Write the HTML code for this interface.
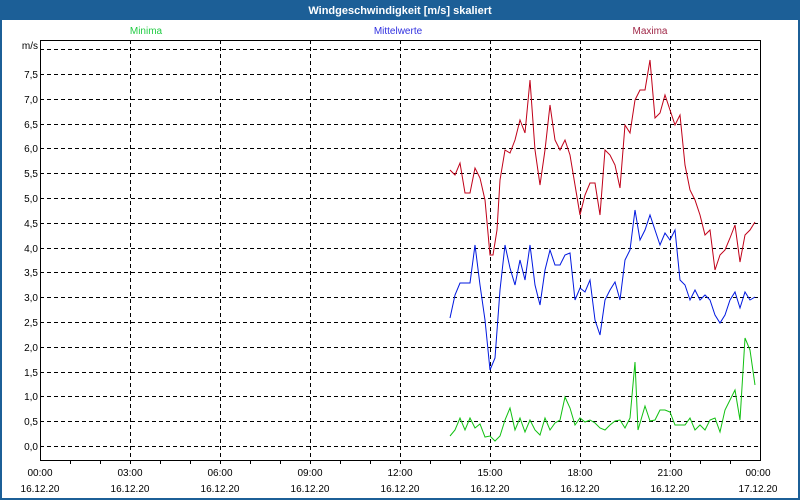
<!DOCTYPE html><html><head><style>body{margin:0;width:800px;height:500px;overflow:hidden;background:#fff;font-family:"Liberation Sans",sans-serif}</style></head><body>
<svg width="800" height="500" xmlns="http://www.w3.org/2000/svg" style="display:block">
<rect x="0" y="0" width="800" height="500" fill="#1c5f97"/>
<rect x="2" y="20" width="796" height="478" fill="#fff"/>
<text x="400" y="14" fill="#fff" font-size="11" font-weight="bold" text-anchor="middle">Windgeschwindigkeit [m/s] skaliert</text>
<g font-size="10" text-anchor="middle">
<text x="146" y="34" fill="#22cc44">Minima</text>
<text x="398" y="34" fill="#3030e0">Mittelwerte</text>
<text x="650" y="34" fill="#a02848">Maxima</text>
</g>
<g stroke="#000" stroke-width="1" stroke-dasharray="4,3" fill="none">
<path d="M40 49.5H760M40 74.5H760M40 99.5H760M40 124.5H760M40 148.5H760M40 173.5H760M40 198.5H760M40 223.5H760M40 248.5H760M40 272.5H760M40 297.5H760M40 322.5H760M40 347.5H760M40 372.5H760M40 396.5H760M40 421.5H760M40 446.5H760"/>
<path d="M130.5 40V460M220.5 40V460M310.5 40V460M400.5 40V460M490.5 40V460M580.5 40V460M670.5 40V460"/>
</g>
<g stroke="#000" fill="none">
<rect x="40.5" y="40.5" width="720" height="420"/>
<path d="M70.5 460V464M100.5 460V464M130.5 460V464M160.5 460V464M190.5 460V464M220.5 460V464M250.5 460V464M280.5 460V464M310.5 460V464M340.5 460V464M370.5 460V464M400.5 460V464M430.5 460V464M460.5 460V464M490.5 460V464M520.5 460V464M550.5 460V464M580.5 460V464M610.5 460V464M640.5 460V464M670.5 460V464M700.5 460V464M730.5 460V464"/>
<path d="M130.5 40V44M220.5 40V44M310.5 40V44M400.5 40V44M490.5 40V44M580.5 40V44M670.5 40V44"/>
</g>
<g font-size="10" fill="#000" text-anchor="end">
<text x="38" y="49">m/s</text>
<text x="38" y="78">7,5</text><text x="38" y="103">7,0</text><text x="38" y="128">6,5</text><text x="38" y="152">6,0</text><text x="38" y="177">5,5</text><text x="38" y="202">5,0</text><text x="38" y="227">4,5</text><text x="38" y="252">4,0</text><text x="38" y="276">3,5</text><text x="38" y="301">3,0</text><text x="38" y="326">2,5</text><text x="38" y="351">2,0</text><text x="38" y="376">1,5</text><text x="38" y="400">1,0</text><text x="38" y="425">0,5</text><text x="38" y="450">0,0</text>
</g>
<g font-size="10" fill="#000" text-anchor="middle">
<text x="40" y="476">00:00</text><text x="40" y="492">16.12.20</text>
<text x="130" y="476">03:00</text><text x="130" y="492">16.12.20</text>
<text x="220" y="476">06:00</text><text x="220" y="492">16.12.20</text>
<text x="310" y="476">09:00</text><text x="310" y="492">16.12.20</text>
<text x="400" y="476">12:00</text><text x="400" y="492">16.12.20</text>
<text x="490" y="476">15:00</text><text x="490" y="492">16.12.20</text>
<text x="580" y="476">18:00</text><text x="580" y="492">16.12.20</text>
<text x="670" y="476">21:00</text><text x="670" y="492">16.12.20</text>
<text x="758" y="476">00:00</text><text x="758" y="492">17.12.20</text>
</g>
<polyline fill="none" stroke="#c00018" stroke-width="1" points="450,170 455,175 460,163 465,193 470,193 475,168 480,178 485,200 490,255 493,255 497,230 500,180 505,150 510,153 515,140 520,120 525,133 530,80 535,150 540,185 545,150 550,105 555,140 560,150 565,140 570,155 575,185 580,215 585,195 590,183 595,183 600,215 605,150 610,155 615,165 620,188 625,125 630,133 635,100 640,90 645,90 650,60 655,118 660,113 665,95 670,110 675,125 680,115 685,165 690,190 695,200 700,215 705,235 710,230 715,270 720,255 725,250 730,238 735,225 740,262 745,235 750,230 755,222"/>
<polyline fill="none" stroke="#0018e0" stroke-width="1" points="450,318 455,295 460,283 465,283 470,283 475,245 480,285 485,320 490,370 495,358 500,290 505,245 510,268 515,285 520,260 525,280 530,245 535,285 540,305 545,270 550,250 555,265 560,265 565,255 570,253 575,300 580,288 585,292 590,280 595,320 600,335 605,300 610,290 615,282 620,300 625,260 630,250 635,210 640,240 645,230 650,215 655,230 660,245 665,233 670,240 675,230 680,280 685,285 690,300 695,290 700,300 705,295 710,300 715,315 720,323 725,315 730,300 735,292 740,308 745,292 750,300 755,297"/>
<polyline fill="none" stroke="#10c010" stroke-width="1" points="450,436 455,430 460,418 465,430 470,418 475,428 480,424 485,437 490,436 495,441 500,436 505,420 510,408 515,430 520,418 525,432 530,420 535,430 540,435 545,418 550,430 555,423 560,420 565,397 570,408 575,425 580,418 585,422 590,420 595,423 600,428 605,430 610,425 615,421 620,420 625,428 630,418 635,362 638,430 645,406 650,421 655,420 660,410 665,410 670,412 675,425 680,425 685,425 690,418 695,430 700,425 705,430 710,420 715,418 720,432 725,410 730,400 735,390 740,420 745,338 750,350 755,385"/>
</svg>
</body></html>
